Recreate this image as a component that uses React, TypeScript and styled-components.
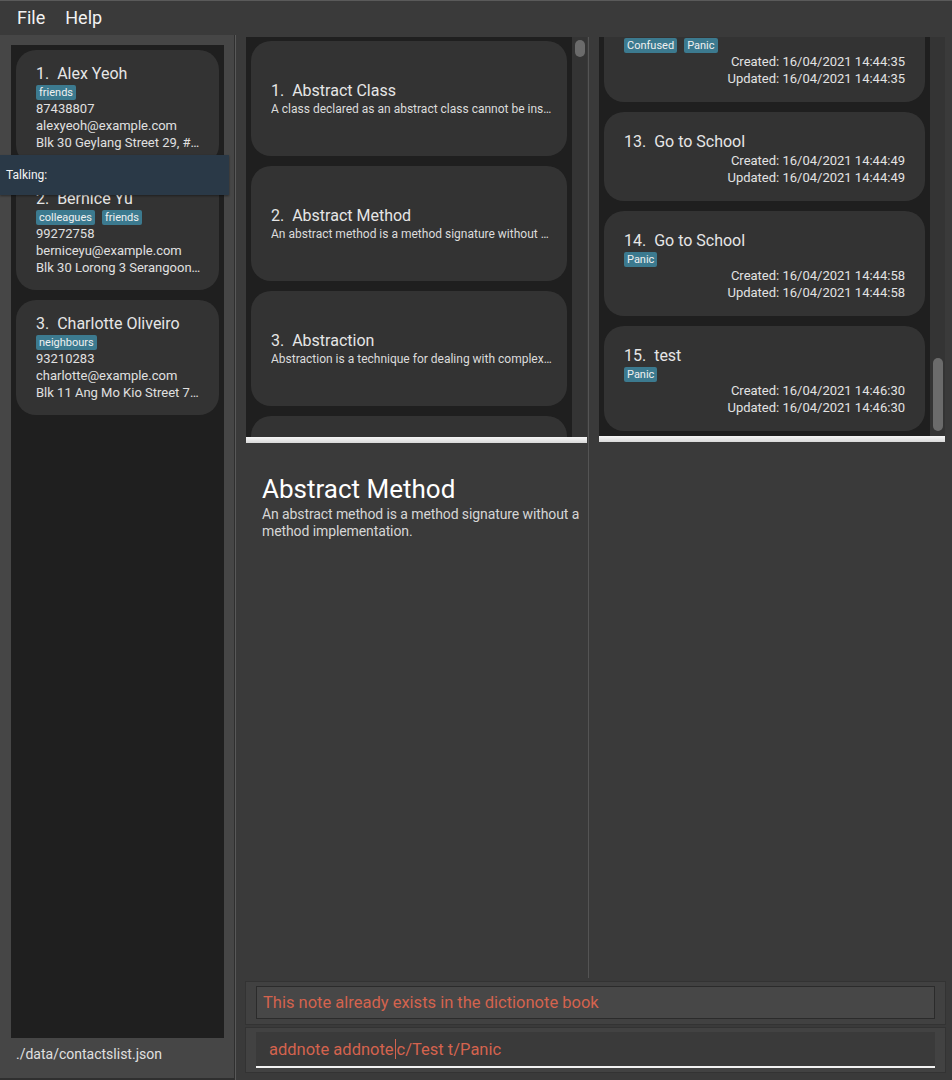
import React from "react";
import styled, { createGlobalStyle } from "styled-components";

const GlobalStyle = createGlobalStyle`
  html, body { margin: 0; padding: 0; background: #3a3a3a; }
  body { font-family: Roboto, Inter, "Noto Sans", "Liberation Sans", sans-serif; color: #e0e0e0; }
  * { box-sizing: border-box; }
`;

const Window = styled.div`
  position: relative;
  width: 952px;
  height: 1080px;
  display: flex;
  flex-direction: column;
  overflow: hidden;
  background: #3a3a3a;
`;

const MenuBar = styled.div`
  height: 35px;
  flex-shrink: 0;
  display: flex;
  align-items: center;
  padding-left: 7px;
  background: #3a3a3a;
  border-top: 1px solid #5a5a5a;
`;

const MenuItem = styled.span`
  font-size: 18px;
  color: #f2f2f2;
  padding: 0 10px;
  line-height: 22px;
`;

const Body = styled.div`
  flex: 1;
  display: flex;
  min-height: 0;
`;

const ContactsPanel = styled.div`
  width: 235px;
  flex-shrink: 0;
  display: flex;
  flex-direction: column;
  background: #464646;
  border-right: 1px solid #2f2f2f;
  border-bottom: 2px solid #2f2f2f;
  padding: 10px 10px 0 11px;
`;

const ContactList = styled.div`
  flex: 1;
  background: #1f1f1f;
  padding: 5px;
  display: flex;
  flex-direction: column;
  gap: 10px;
  overflow: hidden;
`;

const ContactCard = styled.div`
  flex-shrink: 0;
  height: 115px;
  background: #333333;
  border-radius: 20px;
  padding: 14px 16px 14px 20px;
  display: flex;
  flex-direction: column;
`;

const CardTitle = styled.div`
  font-size: 16px;
  line-height: 20px;
  color: #e6e6e6;
  white-space: pre;
`;

const TagRow = styled.div`
  display: flex;
  gap: 7px;
  height: 16px;
  align-items: center;
`;

const Tag = styled.span`
  background: #3c7a8f;
  color: #f0f0f0;
  font-size: 11px;
  line-height: 15px;
  height: 15px;
  padding: 0 3px;
  border-radius: 2px;
`;

const InfoLine = styled.div`
  font-size: 13px;
  line-height: 17px;
  color: #e0e0e0;
  white-space: nowrap;
  overflow: hidden;
  text-overflow: ellipsis;
`;

const StatusBar = styled.div`
  height: 40px;
  flex-shrink: 0;
  padding: 7px 0 0 5px;
  font-size: 14px;
  line-height: 18px;
  color: #e0e0e0;
`;

const Tooltip = styled.div`
  position: absolute;
  left: 0;
  top: 155px;
  width: 229px;
  height: 40px;
  background: #2a3947;
  display: flex;
  align-items: center;
  padding-left: 6px;
  font-size: 12px;
  color: #f4f4f4;
  box-shadow: 0 1px 2px rgba(0, 0, 0, 0.4);
`;

const Main = styled.div`
  flex: 1;
  display: flex;
  flex-direction: column;
  border-left: 1px solid #595959;
  min-width: 0;
`;

const Columns = styled.div`
  flex: 1;
  display: flex;
  min-height: 0;
`;

const NoteColumn = styled.div<{ $width?: number; $pad: string }>`
  ${(p) => (p.$width ? `width: ${p.$width}px; flex-shrink: 0;` : "flex: 1;")}
  display: flex;
  flex-direction: column;
  padding: ${(p) => p.$pad};
  min-width: 0;
`;

const ColumnDivider = styled.div`
  width: 1px;
  flex-shrink: 0;
  background: #545454;
  margin-top: 2px;
`;

const ListFrame = styled.div<{ $height: number }>`
  height: ${(p) => p.$height}px;
  flex-shrink: 0;
  display: flex;
`;

const CardStack = styled.div<{ $end?: boolean }>`
  flex: 1;
  background: #1f1f1f;
  display: flex;
  flex-direction: column;
  justify-content: ${(p) => (p.$end ? "flex-end" : "flex-start")};
  gap: 10px;
  padding: ${(p) => (p.$end ? "0 5px 5px 5px" : "4px 5px 0 5px")};
  overflow: hidden;
`;

const ScrollTrack = styled.div`
  width: 15px;
  flex-shrink: 0;
  background: #343434;
  padding: 0 2px 0 3px;
  display: flex;
  flex-direction: column;
`;

const ScrollThumb = styled.div<{ $top: number; $height: number }>`
  margin-top: ${(p) => p.$top}px;
  height: ${(p) => p.$height}px;
  background: #6b6b6b;
  border-radius: 5px;
`;

const HBar = styled.div`
  height: 6px;
  flex-shrink: 0;
  background: linear-gradient(#f6f6f6, #d9d9d9);
`;

const NoteCard = styled.div`
  flex-shrink: 0;
  height: 115px;
  background: #333333;
  border-radius: 20px;
  padding: 0 15px 0 20px;
  display: flex;
  flex-direction: column;
  justify-content: center;
`;

const NoteDesc = styled.div`
  font-size: 12px;
  line-height: 16px;
  color: #dcdcdc;
  white-space: nowrap;
  overflow: hidden;
  text-overflow: ellipsis;
`;

const EntryCard = styled.div`
  flex-shrink: 0;
  background: #333333;
  border-radius: 20px;
  padding: 20px 20px 15px 20px;
  display: flex;
  flex-direction: column;
`;

const Stamp = styled.div`
  font-size: 13px;
  line-height: 17px;
  color: #e2e2e2;
  text-align: right;
  white-space: nowrap;
`;

const Detail = styled.div`
  padding: 31px 0 0 16px;
`;

const DetailTitle = styled.div`
  font-size: 26px;
  line-height: 31px;
  color: #ffffff;
`;

const DetailText = styled.div`
  font-size: 14px;
  line-height: 17px;
  color: #d6d6d6;
  margin-top: 1px;
  letter-spacing: -0.1px;
`;

const ResultPanel = styled.div`
  height: 44px;
  flex-shrink: 0;
  margin: 3px 6px 0 9px;
  background: #414141;
  border: 1px solid #333333;
  padding: 4px 10px 5px 10px;
  display: flex;
`;

const ResultBox = styled.div`
  flex: 1;
  background: #474747;
  border: 1px solid #2b2b2b;
  display: flex;
  align-items: center;
  padding-left: 6px;
  font-size: 16.5px;
  color: #d4634e;
`;

const CommandPanel = styled.div`
  height: 46px;
  flex-shrink: 0;
  margin: 2px 6px 7px 9px;
  background: #424242;
  border: 1px solid #333333;
  padding: 4px 10px 4px 10px;
  display: flex;
`;

const CommandInput = styled.div`
  flex: 1;
  background: #3a3a3a;
  border-bottom: 2px solid #f2f2f2;
  display: flex;
  align-items: center;
  padding-left: 13px;
  font-size: 16.5px;
  color: #d4634e;
  white-space: pre;
`;

const Caret = styled.span`
  display: inline-block;
  width: 1px;
  height: 20px;
  background: #d4634e;
  margin: 0 1px 0 1px;
`;

const contacts = [
  {
    name: "1.  Alex Yeoh",
    tags: ["friends"],
    phone: "87438807",
    email: "alexyeoh@example.com",
    address: "Blk 30 Geylang Street 29, #06-40",
  },
  {
    name: "2.  Bernice Yu",
    tags: ["colleagues", "friends"],
    phone: "99272758",
    email: "berniceyu@example.com",
    address: "Blk 30 Lorong 3 Serangoon Gardens, #07-18",
  },
  {
    name: "3.  Charlotte Oliveiro",
    tags: ["neighbours"],
    phone: "93210283",
    email: "charlotte@example.com",
    address: "Blk 11 Ang Mo Kio Street 74, #11-04",
  },
];

const notes = [
  { title: "1.  Abstract Class", desc: "A class declared as an abstract class cannot be instantiated." },
  { title: "2.  Abstract Method", desc: "An abstract method is a method signature without a method implementation." },
  { title: "3.  Abstraction", desc: "Abstraction is a technique for dealing with complexity." },
  { title: "4.  Access Modifiers", desc: "Access modifiers control the visibility of members." },
];

const entries = [
  { title: "12.  Feeling Lost", tags: ["Confused", "Panic"], time: "16/04/2021 14:44:35" },
  { title: "13.  Go to School", tags: [], time: "16/04/2021 14:44:49" },
  { title: "14.  Go to School", tags: ["Panic"], time: "16/04/2021 14:44:58" },
  { title: "15.  test", tags: ["Panic"], time: "16/04/2021 14:46:30" },
];

export default function App() {
  return (
    <>
      <GlobalStyle />
      <Window>
        <MenuBar>
          <MenuItem>File</MenuItem>
          <MenuItem>Help</MenuItem>
        </MenuBar>
        <Body>
          <ContactsPanel>
            <ContactList>
              {contacts.map((c) => (
                <ContactCard key={c.name}>
                  <CardTitle>{c.name}</CardTitle>
                  <TagRow>
                    {c.tags.map((t) => (
                      <Tag key={t}>{t}</Tag>
                    ))}
                  </TagRow>
                  <InfoLine>{c.phone}</InfoLine>
                  <InfoLine>{c.email}</InfoLine>
                  <InfoLine>{c.address}</InfoLine>
                </ContactCard>
              ))}
            </ContactList>
            <StatusBar>./data/contactslist.json</StatusBar>
          </ContactsPanel>
          <Main>
            <Columns>
              <NoteColumn $width={352} $pad="2px 1px 0 10px">
                <ListFrame $height={400}>
                  <CardStack>
                    {notes.map((n) => (
                      <NoteCard key={n.title}>
                        <CardTitle>{n.title}</CardTitle>
                        <NoteDesc>{n.desc}</NoteDesc>
                      </NoteCard>
                    ))}
                  </CardStack>
                  <ScrollTrack>
                    <ScrollThumb $top={3} $height={17} />
                  </ScrollTrack>
                </ListFrame>
                <HBar />
                <Detail>
                  <DetailTitle>Abstract Method</DetailTitle>
                  <DetailText>
                    An abstract method is a method signature without a method implementation.
                  </DetailText>
                </Detail>
              </NoteColumn>
              <ColumnDivider />
              <NoteColumn $pad="2px 7px 0 10px">
                <ListFrame $height={399}>
                  <CardStack $end>
                    {entries.map((e) => (
                      <EntryCard key={e.title}>
                        <CardTitle>{e.title}</CardTitle>
                        {e.tags.length > 0 && (
                          <TagRow>
                            {e.tags.map((t) => (
                              <Tag key={t}>{t}</Tag>
                            ))}
                          </TagRow>
                        )}
                        <Stamp>Created: {e.time}</Stamp>
                        <Stamp>Updated: {e.time}</Stamp>
                      </EntryCard>
                    ))}
                  </CardStack>
                  <ScrollTrack>
                    <ScrollThumb $top={321} $height={73} />
                  </ScrollTrack>
                </ListFrame>
                <HBar />
              </NoteColumn>
            </Columns>
            <ResultPanel>
              <ResultBox>This note already exists in the dictionote book</ResultBox>
            </ResultPanel>
            <CommandPanel>
              <CommandInput>
                addnote addnote<Caret />c/Test t/Panic
              </CommandInput>
            </CommandPanel>
          </Main>
        </Body>
        <Tooltip>Talking:</Tooltip>
      </Window>
    </>
  );
}
